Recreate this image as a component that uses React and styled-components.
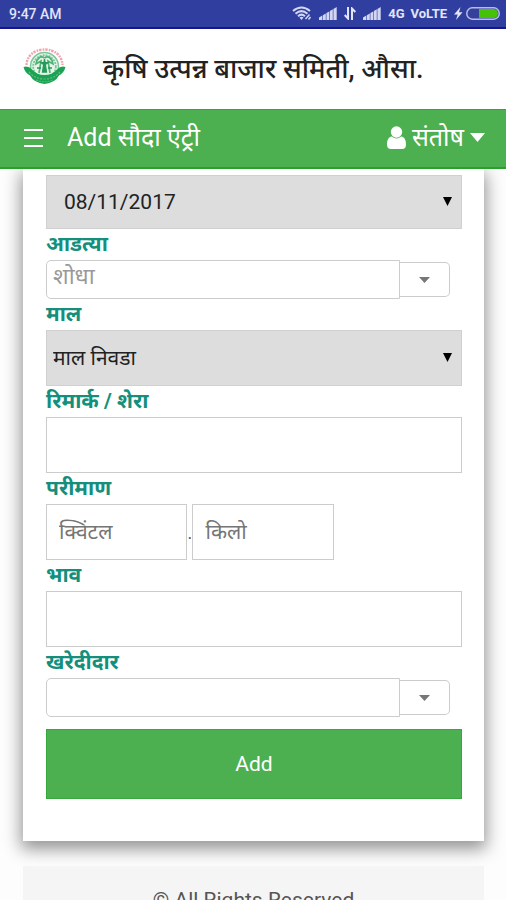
import React, { useState } from "react";
import styled, { createGlobalStyle } from "styled-components";

const GlobalStyle = createGlobalStyle`
  *, *::before, *::after { box-sizing: border-box; }
  body {
    margin: 0;
    background: #fdfdfd;
    color: #222;
    font-family: Roboto, "Noto Sans", "Noto Sans Devanagari", sans-serif;
  }
  button, input, select { font: inherit; margin: 0; }
`;

const Screen = styled.div`
  display: flex;
  flex-direction: column;
  height: 100vh;
`;

const StatusBar = styled.div`
  display: flex;
  align-items: center;
  flex: none;
  height: 29px;
  padding: 0 6px 0 9px;
  background: #303f9f;
  border-bottom: 2px solid #16168c;
  color: #e2e4f8;
  font: 500 14px/16px Roboto, sans-serif;
`;

const StatusIcons = styled.div`
  display: flex;
  align-items: center;
  gap: 7px;
  margin-left: auto;

  svg { display: block; }
`;

const Network = styled.span`
  display: flex;
  gap: 6px;
  font-size: 13px;
  font-weight: 700;
`;

const Charge = styled.div`
  display: flex;
  align-items: center;
  gap: 3px;
`;

const Masthead = styled.header`
  display: flex;
  align-items: center;
  flex: none;
  gap: 37px;
  height: 80px;
  padding: 0 23px;
  background: #fff;

  svg { flex: none; margin-bottom: 6px; }
`;

const SiteTitle = styled.h1`
  margin: 0;
  font-size: 27px;
  line-height: 36px;
  font-weight: 500;
  white-space: nowrap;
`;

const NavBar = styled.nav`
  display: flex;
  align-items: center;
  flex: none;
  height: 60px;
  padding: 0 21px 2px 23px;
  background: #4caf50;
  border-top: 1px solid #35a43a;
  border-bottom: 2px solid #27a02c;
  color: #fff;
`;

const NavButton = styled.button`
  display: flex;
  align-items: center;
  gap: 6px;
  padding: 0;
  border: 0;
  background: none;
  color: inherit;
  font-size: 25px;
  line-height: 32px;
  cursor: pointer;
`;

const PageTitle = styled.h2`
  flex: 1;
  margin: 0 0 0 23px;
  font-size: 25px;
  line-height: 32px;
  font-weight: 400;
`;

const Content = styled.main`
  flex: 1;
  min-height: 0;
  padding: 0 22px 0 23px;
  overflow-y: auto;
  scrollbar-width: none;
`;

const Card = styled.form`
  padding: 6px 22px 42px 23px;
  background: #fff;
  box-shadow: 0 6px 16px 2px rgba(0, 0, 0, 0.42);
`;

const Label = styled.label`
  display: block;
  height: 31px;
  color: #148f7c;
  font-size: 21px;
  line-height: 30px;
  font-weight: 700;
`;

const TextInput = styled.input`
  display: block;
  width: ${(p) => p.$width || "100%"};
  height: 56px;
  padding: 0 12px;
  border: 1px solid #ccc;
  border-radius: 0;
  background: #fff;
  color: #222;
  font-size: 21px;

  &::placeholder { color: #757575; opacity: 1; }
`;

const SelectBox = styled.div`
  position: relative;

  svg {
    position: absolute;
    right: 10px;
    top: calc(50% - 5px);
    pointer-events: none;
  }
`;

const Select = styled.select`
  display: block;
  width: 100%;
  height: ${(p) => p.$height || "56px"};
  padding: 0 30px 0 ${(p) => p.$indent || "6px"};
  appearance: none;
  border: 1px solid #d0d0d0;
  border-radius: 0;
  background: #ddd;
  color: #222;
  font-size: 21px;
`;

const Combo = styled.div`
  display: flex;
  align-items: center;
  width: 97%;
  height: 39px;
`;

const ComboInput = styled.input`
  flex: 1;
  min-width: 0;
  height: 39px;
  padding: 0 6px 6px;
  border: 1px solid #ccc;
  border-radius: 5px 0 0 5px;
  background: #fff;
  color: #222;
  font-size: 23px;

  &::placeholder { color: #999; opacity: 1; }
`;

const ComboButton = styled.button`
  display: grid;
  place-items: center;
  width: 50px;
  height: 35px;
  padding: 0;
  border: 1px solid #ccc;
  border-left: 0;
  border-radius: 0 5px 5px 0;
  background: #fff;
`;

const Quantity = styled.div`
  display: flex;
  align-items: center;
`;

const Point = styled.span`
  width: 5px;
  color: #555;
  font-size: 18px;
  text-align: center;
`;

const SubmitButton = styled.button`
  display: block;
  width: 100%;
  height: 70px;
  margin-top: 12px;
  border: 1px solid #38a83d;
  background: #4caf50;
  color: #fff;
  font-size: 21px;
`;

const Footer = styled.footer`
  margin-top: 25px;
  padding: 19px 0;
  background: #f5f5f5;
  color: #555;
  font-size: 21px;
  line-height: 30px;
  text-align: center;
`;

const Signal = () => (
  <svg width="18" height="13" viewBox="0 0 18 13" fill="#d3d6f3" aria-hidden="true">
    <path d="M0 10.500L3.300 8.600V13H0zM3.900 8.200L6.800 6.500V13H3.900zM7.400 6.100L10.300 4.400V13H7.400zM10.900 4L13.800 2.300V13h-2.900zM14.400 2L17.700 0V13h-3.300z" />
  </svg>
);

const Wifi = () => (
  <svg width="20" height="15" viewBox="0 0 20 15" fill="none" stroke="#d3d6f3" strokeWidth="2" aria-hidden="true">
    <path d="M1 5Q9.500-2 18 5M3.500 7.800Q9.500 2.500 15.500 7.800M6 10.300Q9.500 7 13 10.300" />
    <path d="M7.500 11.500Q9.500 10 11.500 11.500L9.500 14z" fill="#d3d6f3" stroke="none" />
    <path d="M13.500 13l4-4.500M16.500 13.500l2-2.500" strokeWidth="1.500" />
  </svg>
);

const DataArrows = () => (
  <svg width="12" height="13" viewBox="0 0 12 13" fill="none" stroke="#e2e4f8" strokeWidth="2" aria-hidden="true">
    <path d="M4 0v11.500L.7 8M8 13V1.500L11.300 5" />
  </svg>
);

const Bolt = () => (
  <svg width="9" height="13" viewBox="0 0 9 13" fill="#e2e4f8" aria-hidden="true">
    <path d="M6.500 0L0 7.500h3.700L2 13l6.500-7.700H5z" />
  </svg>
);

const Battery = () => (
  <svg width="34" height="13" viewBox="0 0 34 13" aria-hidden="true">
    <rect x=".8" y=".8" width="32.400" height="11.400" rx="5.500" fill="#34409a" stroke="#b9bce8" strokeWidth="1.500" />
    <path d="M13 2h14.500a4.500 4.500 0 0 1 0 9H13z" fill="#45c208" />
  </svg>
);

const Emblem = () => (
  <svg width="43" height="37" viewBox="0 0 43 37" fill="none" role="img" aria-label="Emblem">
    <path d="M3.500 17C4 7 12 1.500 21.500 1.500S39 7 39.500 17" stroke="#f2a3b0" strokeWidth="2.400" strokeDasharray="1.700 .9 2.400 1.100" />
    <circle cx="21.500" cy="18.500" r="14" fill="#e6f4ea" stroke="#7cc797" strokeWidth="1.500" />
    <circle cx="21.500" cy="18.500" r="11.300" stroke="#79c495" strokeWidth="1.800" strokeDasharray="2 1" />
    <path d="M21.500 10c-4-3-8 1-8.500 6l5-3-2 12M21.500 10c4-3 8 1 8.500 6l-5-3 2 12" stroke="#4fb277" strokeWidth="1.700" />
    <path d="M21.500 11l-2 13h4zM17 14l4.500 3 4.500-3M14 20h4M25 20h4" fill="#259b58" stroke="#259b58" strokeWidth="1.300" />
    <path d="M.5 19Q5 17 9 21.500Q14 27 21.500 27T34 21.500Q38 17 42.500 19Q41 25 36 27.500Q32 35 21.500 36Q11 35 7 27.500Q2 25 .5 19z" fill="#1ba353" />
    <path d="M6 24Q12 31 21.500 31T37 24" stroke="#5fbd83" strokeWidth="1.200" strokeDasharray="2 1.300" />
    <path d="M13 32Q21.500 35.500 30 32" stroke="#5fbd83" strokeDasharray="2 1" />
  </svg>
);

const MenuIcon = () => (
  <svg width="21" height="20" viewBox="0 0 21 20" stroke="#fff" strokeWidth="2" aria-hidden="true">
    <path d="M1 2h19M1 10h19M1 18h19" />
  </svg>
);

const UserIcon = () => (
  <svg width="19" height="23" viewBox="0 0 19 23" fill="#fff" aria-hidden="true">
    <circle cx="9.500" cy="6" r="5.700" />
    <path d="M4.800 10.500Q9.500 14.500 14.200 10.500C18 11 19 15 19 18.500Q19 23 15 23H4Q0 23 0 18.500C0 15 1 11 4.800 10.500z" />
  </svg>
);

const Caret = ({ width, height, color }) => (
  <svg width={width} height={height} viewBox="0 0 10 10" preserveAspectRatio="none" fill={color} aria-hidden="true">
    <path d="M0 0h10L5 10z" />
  </svg>
);

function SelectField({ children, ...rest }) {
  return (
    <SelectBox>
      <Select {...rest}>{children}</Select>
      <Caret width={9} height={9} color="#000" />
    </SelectBox>
  );
}

function ComboField({ id, label, placeholder }) {
  const [value, setValue] = useState("");
  return (
    <>
      <Label htmlFor={id}>{label}</Label>
      <Combo>
        <ComboInput id={id} placeholder={placeholder} value={value} onChange={(e) => setValue(e.target.value)} />
        <ComboButton type="button" aria-label={label}>
          <Caret width={11} height={6} color="#777" />
        </ComboButton>
      </Combo>
    </>
  );
}

export default function App() {
  return (
    <Screen>
      <GlobalStyle />
      <StatusBar>
        <span>9:47 AM</span>
        <StatusIcons>
          <Wifi />
          <Signal />
          <DataArrows />
          <Signal />
          <Network>
            <span>4G</span>
            <span>VoLTE</span>
          </Network>
          <Charge>
            <Bolt />
            <Battery />
          </Charge>
        </StatusIcons>
      </StatusBar>
      <Masthead>
        <Emblem />
        <SiteTitle>कृषि उत्पन्न बाजार समिती, औसा.</SiteTitle>
      </Masthead>
      <NavBar>
        <NavButton type="button" aria-label="Menu">
          <MenuIcon />
        </NavButton>
        <PageTitle>Add सौदा एंट्री</PageTitle>
        <NavButton type="button">
          <UserIcon />
          <span>संतोष</span>
          <Caret width={15} height={9} color="#fff" />
        </NavButton>
      </NavBar>
      <Content>
        <Card onSubmit={(e) => e.preventDefault()}>
          <SelectField aria-label="Date" $height="54px" $indent="17px">
            <option>08/11/2017</option>
          </SelectField>
          <ComboField id="agent" label="आडत्या" placeholder="शोधा" />
          <Label htmlFor="goods">माल</Label>
          <SelectField id="goods">
            <option>माल निवडा</option>
          </SelectField>
          <Label htmlFor="remark">रिमार्क / शेरा</Label>
          <TextInput id="remark" />
          <Label htmlFor="quintal">परीमाण</Label>
          <Quantity>
            <TextInput id="quintal" $width="34%" placeholder="क्विंटल" />
            <Point>.</Point>
            <TextInput $width="34%" placeholder="किलो" aria-label="किलो" />
          </Quantity>
          <Label htmlFor="rate">भाव</Label>
          <TextInput id="rate" />
          <ComboField id="buyer" label="खरेदीदार" />
          <SubmitButton type="submit">Add</SubmitButton>
        </Card>
        <Footer>© All Rights Reserved</Footer>
      </Content>
    </Screen>
  );
}
